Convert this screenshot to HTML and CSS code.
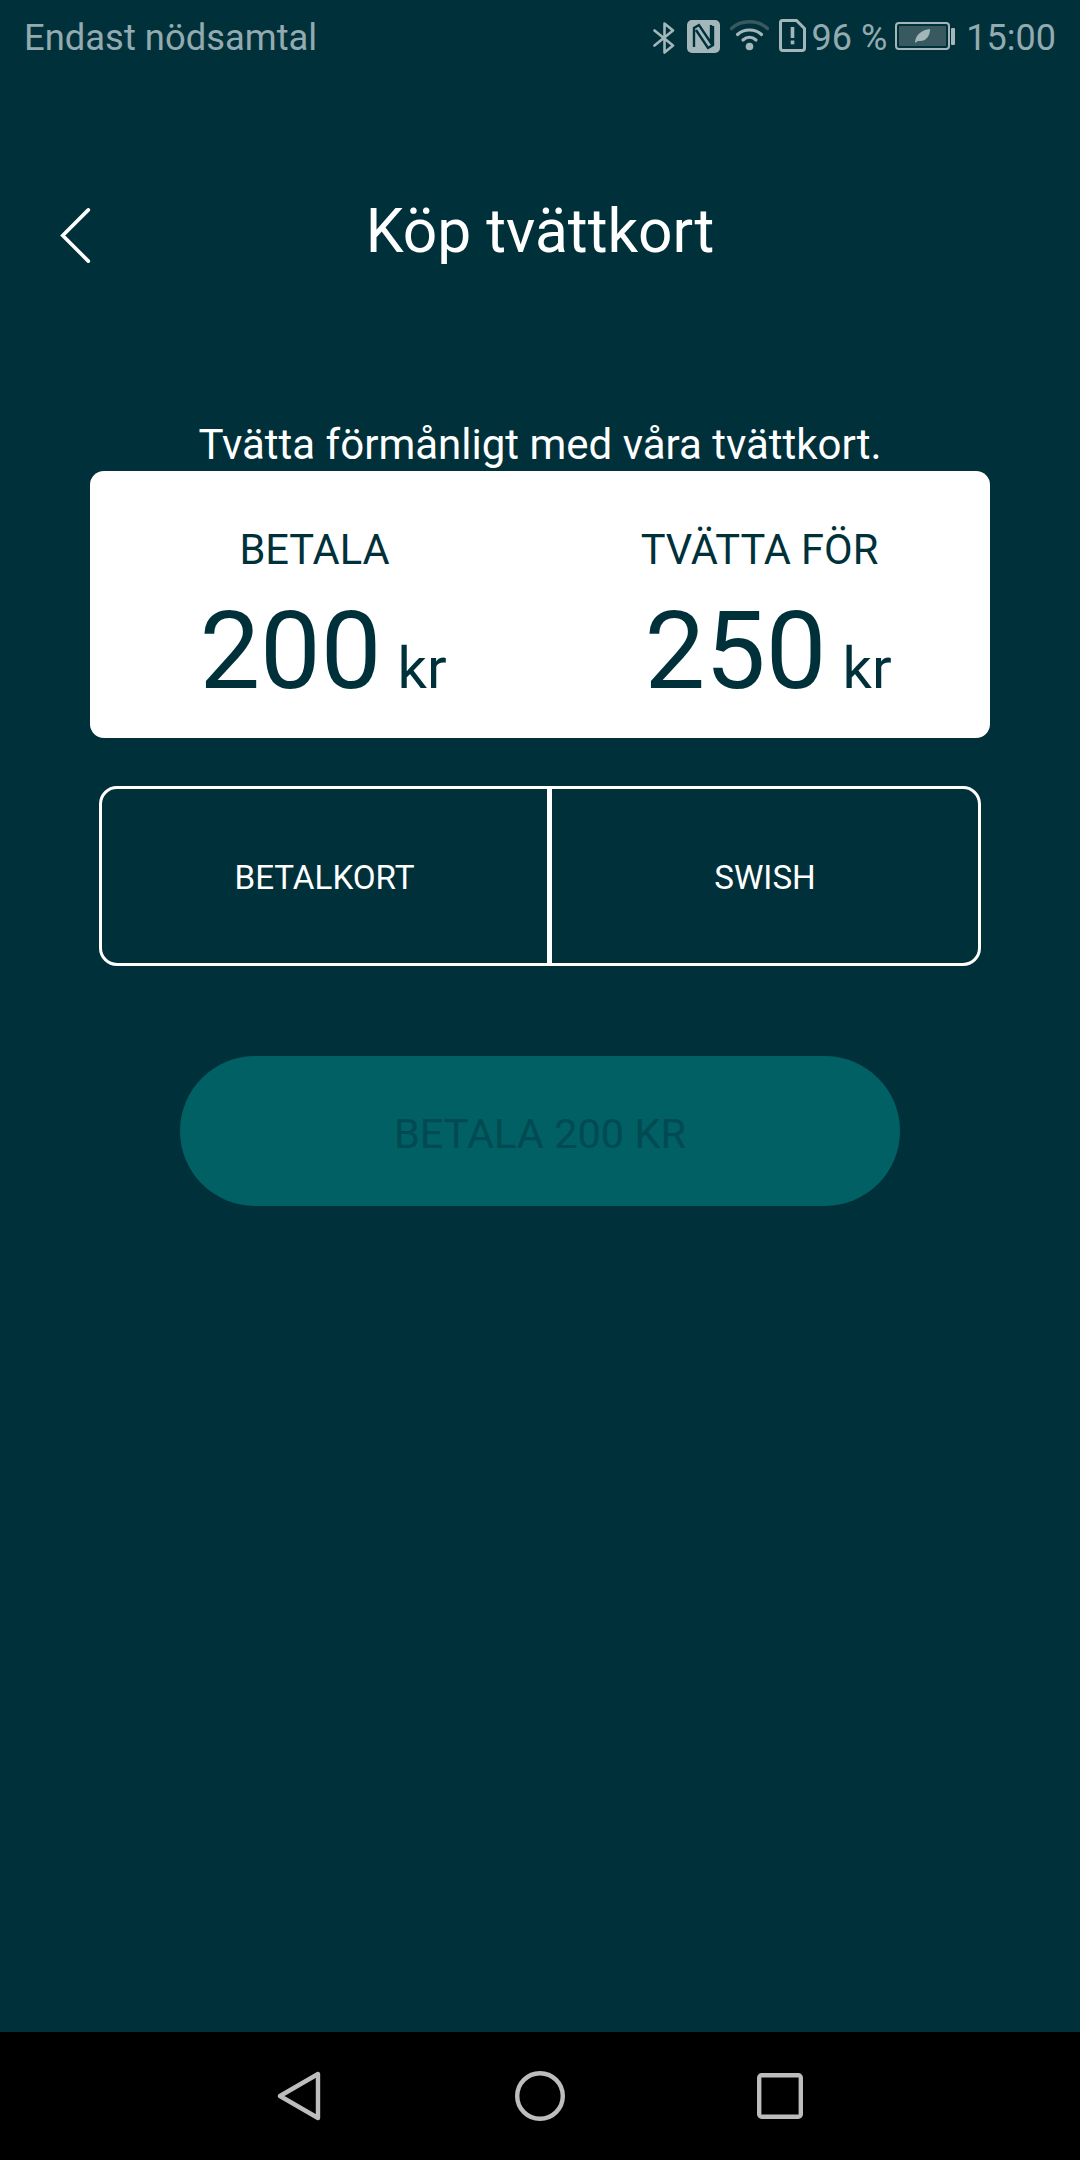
FILE: index.html
```html
<!DOCTYPE html>
<html lang="sv">
<head>
<meta charset="utf-8">
<title>Köp tvättkort</title>
<link rel="stylesheet" href="styles.css">
</head>
<body>
<div class="app">
  <div class="statusbar">
    <span class="carrier">Endast nödsamtal</span>
    <div class="status-right">
      <svg class="ic-bt" width="23" height="32" viewBox="0 0 23 32"><path d="M1.5 8.5 L20 23.5 L11.5 30.5 V1.5 L20 8.5 L1.5 23.5" fill="none" stroke="#a3b7bb" stroke-width="2.6" stroke-linejoin="round" stroke-linecap="round"/></svg>
      <svg class="ic-nfc" width="33" height="33" viewBox="0 0 33 33"><rect width="33" height="33" rx="5" fill="#a3b7bb"/><path d="M7 27 V8 L12 5 L24 23 V5 M26 6 V25 L21 28 L9 10" fill="none" stroke="#00313a" stroke-width="2.4"/></svg>
      <svg class="ic-wifi" width="39" height="32" viewBox="0 0 39 32"><path d="M1.5 9.5 C11 0.5 28 0.5 37.5 9.5" fill="none" stroke="#38595f" stroke-width="3.4" stroke-linecap="round"/><path d="M7.5 15.5 C14 9.5 25 9.5 31.5 15.5 M13 21 C17 17.5 22 17.5 26 21" fill="none" stroke="#a3b7bb" stroke-width="3.2" stroke-linecap="round"/><circle cx="19.5" cy="27.5" r="3.8" fill="#a3b7bb"/></svg>
      <svg class="ic-sim" width="27" height="33" viewBox="0 0 27 33"><path d="M3.5 1.5 H17.5 L25.5 9.5 V29 Q25.5 31.5 23 31.5 H4 Q1.5 31.5 1.5 29 V3.5 Q1.5 1.5 3.5 1.5 Z" fill="none" stroke="#a3b7bb" stroke-width="3"/><rect x="11.7" y="8" width="3.6" height="11" fill="#a3b7bb"/><rect x="11.7" y="21.5" width="3.6" height="3.8" fill="#a3b7bb"/></svg>
      <span class="pct">96 %</span>
      <svg class="ic-batt" width="60" height="28" viewBox="0 0 60 28"><rect x="1" y="1" width="53" height="26" rx="3" fill="none" stroke="#a3b7bb" stroke-width="2"/><rect x="4" y="4" width="47" height="20" fill="#38595f"/><rect x="56" y="6" width="4" height="17" rx="1" fill="#a3b7bb"/><path d="M20 20 C21 12 27 8 35 7 C35 14 31 20 23 19 L20 21 Z" fill="#a3b7bb"/></svg>
      <span class="clock">15:00</span>
    </div>
  </div>

  <main class="main">
    <header class="header">
      <svg class="back" width="32" height="58" viewBox="0 0 32 58"><path d="M29 2 L2 29 L29 56" fill="none" stroke="#fff" stroke-width="3.8" stroke-linecap="round" stroke-linejoin="miter"/></svg>
      <h1 class="title">Köp tvättkort</h1>
    </header>

    <p class="intro">Tvätta förmånligt med våra tvättkort.</p>

    <section class="card">
      <div class="col">
        <div class="label">BETALA</div>
        <div class="amount">200<span class="unit">kr</span></div>
      </div>
      <div class="col">
        <div class="label">TVÄTTA FÖR</div>
        <div class="amount">250<span class="unit">kr</span></div>
      </div>
    </section>

    <div class="segments">
      <div class="segment seg-left">BETALKORT</div>
      <div class="segment seg-right">SWISH</div>
    </div>

    <div class="pay">BETALA 200 KR</div>
  </main>

  <nav class="navbar">
    <svg width="46" height="50" viewBox="0 0 46 50"><path d="M41 3 V47 L3 25 Z" fill="none" stroke="#bdbdbd" stroke-width="4.4" stroke-linejoin="round"/></svg>
    <svg width="50" height="50" viewBox="0 0 50 50"><circle cx="25" cy="25" r="22.8" fill="none" stroke="#bdbdbd" stroke-width="4.4"/></svg>
    <svg width="46" height="46" viewBox="0 0 46 46"><rect x="2.2" y="2.2" width="41.6" height="41.6" rx="2.5" fill="none" stroke="#bdbdbd" stroke-width="4.4"/></svg>
  </nav>
</div>
</body>
</html>
```

FILE: styles.css
```css
* { box-sizing: border-box; }
html, body { margin: 0; padding: 0; }
body { background: #00313a; font-family: Roboto, "Liberation Sans", sans-serif; }
.app { width: 1080px; height: 2160px; display: flex; flex-direction: column; overflow: hidden; }

.statusbar {
  height: 72px; flex: none; display: flex; justify-content: space-between; align-items: flex-start;
  padding: 15px 24px 0 24px; color: #93abb0; font-size: 36.4px; line-height: 46px;
}
.status-right { display: flex; align-items: flex-start; }
.status-right svg { display: block; flex: none; }
.ic-bt { margin-top: 7px; }
.ic-nfc { margin: 5px 0 0 11px; }
.ic-wifi { margin: 4px 0 0 10px; }
.ic-sim { margin: 4px 0 0 10px; }
.pct { margin-left: 6px; font-size: 36px; }
.ic-batt { margin: 7px 0 0 8px; }
.clock { margin-left: 11px; font-size: 36px; }

.main { flex: 1; display: flex; flex-direction: column; align-items: center; padding-top: 120px; }
.header { position: relative; width: 100%; height: 80px; display: flex; justify-content: center; }
.back { position: absolute; left: 60px; top: 16px; height: 55px; }
.title { margin: 0; font-size: 60.5px; font-weight: 400; line-height: 80px; color: #fff; }

.intro { margin: 148px 0 0; height: 51px; font-size: 42px; line-height: 49px; color: #fff; }

.card {
  width: 900px; height: 267px; background: #fff; border-radius: 14px; color: #00313a;
  display: grid; grid-template-columns: 445px 445px; padding: 54px 0 0 2px;
}
.col { display: flex; flex-direction: column; align-items: center; }
.label { font-size: 41.6px; line-height: 50px; }
.amount { font-size: 108px; line-height: 120px; margin-top: 16px; padding-left: 17px; }
.unit { font-size: 58px; margin-left: 16px; }

.segments { width: 882px; height: 180px; margin-top: 48px; display: flex; border: 3px solid #fff; border-radius: 18px; }
.segment { flex: 1; display: flex; align-items: center; justify-content: center; color: #fff; font-size: 33.2px; padding-top: 2px; }
.seg-left { border-right: 5px solid #fff; flex: 0 0 450px; }

.pay {
  width: 720px; height: 150px; margin-top: 90px; border-radius: 75px; background: #006064;
  color: #014a52; font-size: 41.5px; display: flex; align-items: center; justify-content: center; padding-top: 4px;
}

.navbar {
  height: 128px; flex: none; background: #000; display: flex; justify-content: center; align-items: center;
  gap: 192px;
}
```
